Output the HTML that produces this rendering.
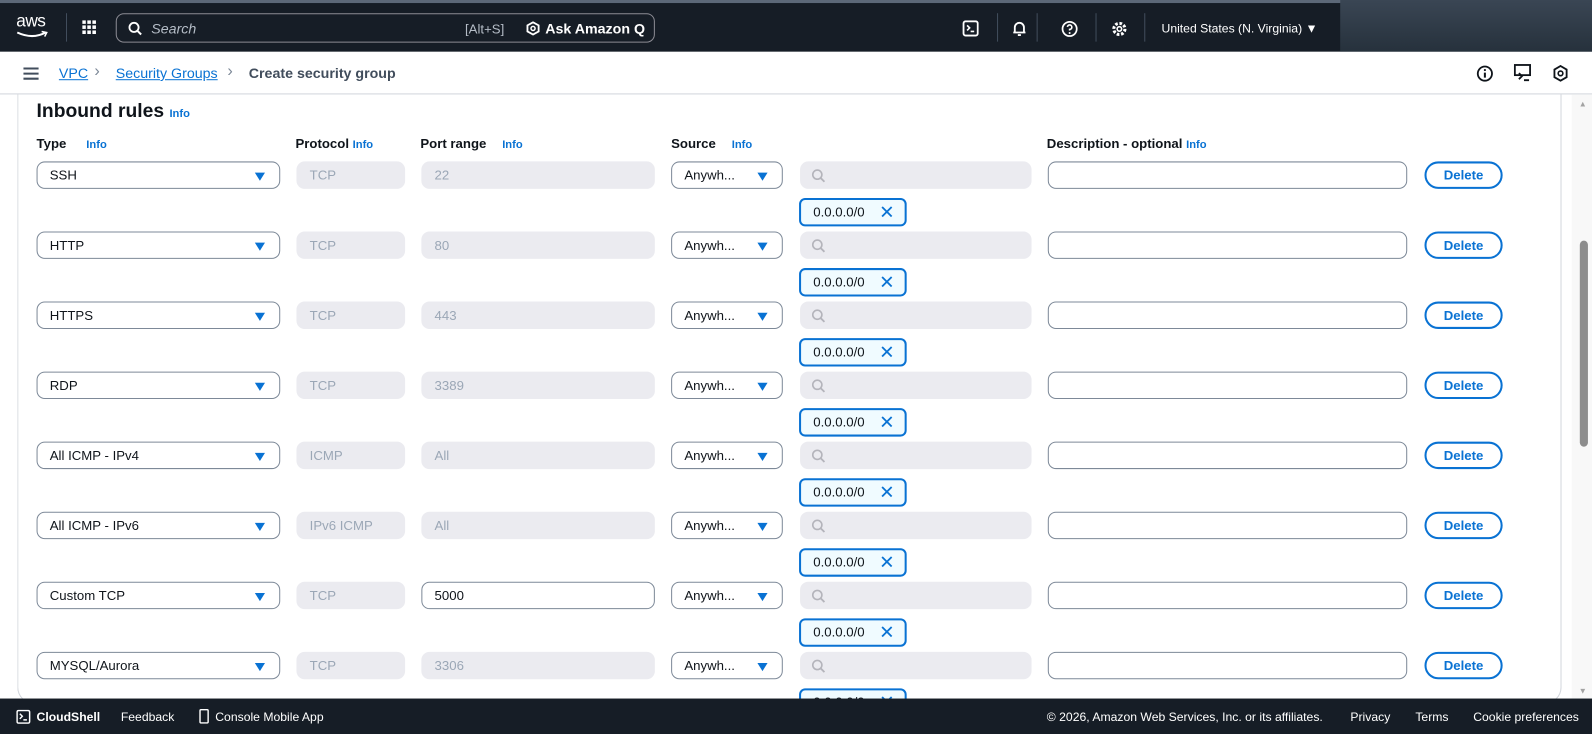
<!DOCTYPE html>
<html><head><meta charset="utf-8"><style>
*{box-sizing:border-box;margin:0;padding:0}
html,body{width:1592px;height:734px;overflow:hidden;background:#fff}
body{font-family:"Liberation Sans",sans-serif;font-size:13px;color:#0f141a}
#w{position:absolute;left:0;top:0;width:1568px;height:723px;transform:scale(1.01531);transform-origin:0 0}
.top{position:absolute;left:0;top:0;width:1568px;height:51px;background:#161d26;border-top:3px solid #5c6878}
.a{position:absolute}
.sep{position:absolute;top:10px;width:1px;height:28px;background:#414d5c}
.white{color:#fff}
.crumb{position:absolute;top:51px;left:0;width:1568px;height:42px;border-bottom:1px solid #d1d5db;background:#fff}
.link{color:#0972d3;text-decoration:underline}
.card{position:absolute;left:17px;top:93px;width:1521px;height:600px;border:1px solid #d1d5db;border-top:none;border-radius:0 0 16px 16px}
.info{color:#0972d3;font-weight:bold;font-size:11px}
.lbl{position:absolute;top:134px;font-weight:bold;font-size:13px}
.f{position:absolute;height:27px;border-radius:8px;padding:0 12px;line-height:25px;font-size:13px}
.sel{border:1px solid #7d8998;background:#fff}
.dis{background:#ebebf0;color:#9ba7b6;border:1px solid #ebebf0}
.tri{position:absolute;right:14px;top:10px;width:0;height:0;border-left:5px solid transparent;border-right:5px solid transparent;border-top:8px solid #0972d3}
.chip{position:absolute;height:28px;width:106px;border:2px solid #0972d3;background:#f0fbff;border-radius:6px;padding-left:12px;line-height:24px;font-size:13px}
.chip span{position:absolute;right:10px;top:0;color:#0972d3;font-size:18px}
.del{position:absolute;height:27px;width:77px;border:2px solid #0972d3;border-radius:14px;color:#0972d3;font-weight:bold;text-align:center;line-height:23px;font-size:13px}
.foot{position:absolute;left:0;top:688px;width:1568px;height:35px;background:#161d26;color:#fff;font-size:12px}
.foot div{position:absolute;top:11px}
</style></head><body><div id="w">
<div class="top">
 <div class="a white" style="left:16px;top:8px;font-size:17px;letter-spacing:-0.5px">aws</div>
 <svg class="a" style="left:16px;top:27px" width="32" height="8"><path d="M1 2 Q16 9 29 2" stroke="#fff" stroke-width="2" fill="none"/><path d="M25 1 L30 2 L28 6" stroke="#fff" stroke-width="1.5" fill="none"/></svg>
 <div class="sep" style="left:65px"></div>
 <svg class="a" style="left:81px;top:17px" width="14" height="14" fill="#fff"><rect x="0" y="0" width="3.5" height="3.5"/><rect x="5" y="0" width="3.5" height="3.5"/><rect x="10" y="0" width="3.5" height="3.5"/><rect x="0" y="5" width="3.5" height="3.5"/><rect x="5" y="5" width="3.5" height="3.5"/><rect x="10" y="5" width="3.5" height="3.5"/><rect x="0" y="10" width="3.5" height="3.5"/><rect x="5" y="10" width="3.5" height="3.5"/><rect x="10" y="10" width="3.5" height="3.5"/></svg>
 <div class="a" style="left:114px;top:10px;width:531px;height:29px;border:1px solid #8c8c94;border-radius:8px"></div>
 <svg class="a" style="left:126px;top:18px" width="14" height="14"><circle cx="6" cy="6" r="4.5" stroke="#fff" stroke-width="1.8" fill="none"/><path d="M9.5 9.5 L13 13" stroke="#fff" stroke-width="2"/></svg>
 <div class="a" style="left:149px;top:17px;color:#b4bcc6;font-style:italic;font-size:14px">Search</div>
 <div class="a" style="left:458px;top:18px;color:#b4bcc6;font-size:13px">[Alt+S]</div>
 <svg class="a" style="left:518px;top:18px" width="14" height="14"><path d="M7 1 L12.5 4 L12.5 10 L7 13 L1.5 10 L1.5 4 Z" stroke="#fff" stroke-width="1.8" fill="none"/><circle cx="7" cy="7" r="2" stroke="#fff" stroke-width="1.5" fill="none"/></svg>
 <div class="a white" style="left:537px;top:17px;font-weight:bold;font-size:14px">Ask Amazon Q</div>
 <svg class="a" style="left:948px;top:17px" width="16" height="16"><rect x="1" y="1" width="14" height="14" rx="2" stroke="#fff" stroke-width="1.8" fill="none"/><path d="M4.5 5 L7 7.5 L4.5 10 M8 11 H11.5" stroke="#fff" stroke-width="1.6" fill="none"/></svg>
 <div class="sep" style="left:982px"></div>
 <svg class="a" style="left:996px;top:17px" width="16" height="16"><path d="M3.5 12 V7 A4.5 4.5 0 0 1 12.5 7 V12 H2 H14 M6.5 14.5 H9.5" stroke="#fff" stroke-width="1.8" fill="none"/></svg>
 <div class="sep" style="left:1021px"></div>
 <svg class="a" style="left:1045px;top:17px" width="17" height="17"><circle cx="8.5" cy="8.5" r="7" stroke="#fff" stroke-width="1.7" fill="none"/><path d="M6.3 6.5 A2.2 2.2 0 1 1 8.5 9 V10" stroke="#fff" stroke-width="1.6" fill="none"/><circle cx="8.5" cy="12.5" r="1" fill="#fff"/></svg>
 <div class="sep" style="left:1079px"></div>
 <svg class="a" style="left:1094px;top:17px" width="17" height="17"><circle cx="8.5" cy="8.5" r="5.5" stroke="#fff" stroke-width="3" stroke-dasharray="2.6 1.7" fill="none"/><circle cx="8.5" cy="8.5" r="2.2" stroke="#fff" stroke-width="1.6" fill="none"/></svg>
 <div class="sep" style="left:1127px"></div>
 <div class="a white" style="left:1144px;top:18px;font-size:12px">United States (N. Virginia) ▼</div>
 <div class="a" style="left:1320px;top:-3px;width:248px;height:51px;background:linear-gradient(180deg,#3a4654,#26313c)"></div>
</div>
<div class="crumb">
 <svg class="a" style="left:23px;top:15px" width="16" height="13"><path d="M0 1.5 H15 M0 6.5 H15 M0 11.5 H15" stroke="#414d5c" stroke-width="2"/></svg>
 <div class="a link" style="left:58px;top:13px;font-size:14px">VPC</div>
 <div class="a" style="left:93px;top:11px;color:#7d8998;font-size:16px">›</div>
 <div class="a link" style="left:114px;top:13px;font-size:14px">Security Groups</div>
 <div class="a" style="left:224px;top:11px;color:#7d8998;font-size:16px">›</div>
 <div class="a" style="left:245px;top:13px;font-size:14px;font-weight:bold;color:#414d5c">Create security group</div>
 <svg class="a" style="left:1454px;top:13px" width="17" height="17"><circle cx="8.5" cy="8.5" r="7" stroke="#0f141a" stroke-width="1.8" fill="none"/><path d="M8.5 7.5 V12.5" stroke="#0f141a" stroke-width="2"/><circle cx="8.5" cy="5" r="1.1" fill="#0f141a"/></svg>
 <svg class="a" style="left:1491px;top:12px" width="18" height="18"><rect x="1" y="1" width="15" height="10" stroke="#0f141a" stroke-width="1.8" fill="none"/><path d="M5 9 L8 12 L5 15 M10 16 H15" stroke="#0f141a" stroke-width="1.8" fill="none"/></svg>
 <svg class="a" style="left:1529px;top:13px" width="16" height="17"><path d="M8 1 L14 4.5 L14 12 L8 15.5 L2 12 L2 4.5 Z" stroke="#0f141a" stroke-width="1.8" fill="none"/><circle cx="8" cy="8.3" r="2.3" stroke="#0f141a" stroke-width="1.6" fill="none"/></svg>
</div>
<div class="card"></div>
<div class="a" style="left:1548px;top:93px;width:20px;height:595px;background:#f8f8f8"></div>
<div class="a" style="left:1555px;top:98px;color:#a3a3a3;font-size:8px">▲</div>
<div class="a" style="left:1555px;top:676px;color:#a3a3a3;font-size:8px">▼</div>
<div class="a" style="left:1556px;top:237px;width:8px;height:203px;background:#8d8d8d;border-radius:4px"></div>
<div class="a" style="left:36px;top:99px;font-size:19px;font-weight:bold">Inbound rules <span class="info">Info</span></div>
<div class="lbl" style="left:36px">Type <span class="info" style="margin-left:16px">Info</span></div>
<div class="lbl" style="left:291px">Protocol <span class="info">Info</span></div>
<div class="lbl" style="left:414px">Port range <span class="info" style="margin-left:12px">Info</span></div>
<div class="lbl" style="left:661px">Source <span class="info" style="margin-left:12px">Info</span></div>
<div class="lbl" style="left:1031px">Description - optional <span class="info">Info</span></div>
<div id="rows"></div>
<div class="foot">
 <svg class="a" style="left:16px;top:11px" width="14" height="14"><rect x="0.8" y="0.8" width="12.4" height="12.4" rx="1.5" stroke="#fff" stroke-width="1.5" fill="none"/><path d="M3.5 4 L6 6.5 L3.5 9 M7 10 H10.5" stroke="#fff" stroke-width="1.4" fill="none"/></svg>
 <div style="left:36px;font-weight:bold">CloudShell</div>
 <div style="left:119px">Feedback</div>
 <svg class="a" style="left:196px;top:10px" width="10" height="15"><rect x="1" y="1" width="8" height="13" rx="1" stroke="#fff" stroke-width="1.4" fill="none"/></svg>
 <div style="left:212px">Console Mobile App</div>
 <div style="left:1031px">© 2026, Amazon Web Services, Inc. or its affiliates.</div>
 <div style="left:1330px">Privacy</div>
 <div style="left:1394px">Terms</div>
 <div style="left:1451px">Cookie preferences</div>
</div>
</div>
<script>
var R=[["SSH","TCP","22"],["HTTP","TCP","80"],["HTTPS","TCP","443"],["RDP","TCP","3389"],["All ICMP - IPv4","ICMP","All"],["All ICMP - IPv6","IPv6 ICMP","All"],["Custom TCP","TCP","5000",1],["MYSQL/Aurora","TCP","3306"]];
var h="";
R.forEach(function(r,i){var y=159+69*i;
h+='<div class="f sel" style="left:36px;top:'+y+'px;width:240px">'+r[0]+'<div class="tri"></div></div>';
h+='<div class="f dis" style="left:292px;top:'+y+'px;width:107px">'+r[1]+'</div>';
h+='<div class="f '+(r[3]?'sel':'dis')+'" style="left:415px;top:'+y+'px;width:230px">'+r[2]+'</div>';
h+='<div class="f sel" style="left:661px;top:'+y+'px;width:110px">Anywh...<div class="tri"></div></div>';
h+='<div class="f dis" style="left:788px;top:'+y+'px;width:228px"><svg style="position:absolute;left:10px;top:6px" width="14" height="14"><circle cx="6" cy="6" r="4.5" stroke="#b4b4bb" stroke-width="1.6" fill="none"/><path d="M9.5 9.5 L13 13" stroke="#b4b4bb" stroke-width="1.8"/></svg></div>';
h+='<div class="f sel" style="left:1032px;top:'+y+'px;width:354px"></div>';
h+='<div class="del" style="left:1403px;top:'+y+'px">Delete</div>';
h+='<div class="chip" style="left:787px;top:'+(y+36)+'px">0.0.0.0/0<span>✕</span></div>';
});
document.getElementById("rows").innerHTML=h;
</script>
</body></html>
